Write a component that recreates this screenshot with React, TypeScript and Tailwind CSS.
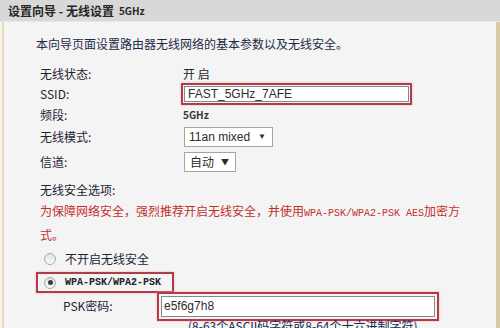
import React from "react";

function Radio({ checked }: { checked?: boolean }) {
  return (
    <div className="w-[12px] h-[12px] rounded-full border border-[#a9a9a9] bg-gradient-to-b from-[#e2e2e2] to-[#fbfbfb] flex items-center justify-center shrink-0">
      {checked ? <div className="w-[5px] h-[5px] rounded-full bg-[#3c3c3c]" /> : null}
    </div>
  );
}

function Row({ label, className, children }: { label: string; className: string; children?: React.ReactNode }) {
  return (
    <div className={"flex items-center " + className}>
      <div className="w-[143px] shrink-0">{label}</div>
      {children}
    </div>
  );
}

export default function App() {
  return (
    <div className="w-[500px] h-[328px] overflow-hidden bg-[#f4f4f4] flex flex-col font-['Noto_Sans_CJK_SC',sans-serif] text-[12px] text-[#1e2433]">
      <div className="h-[22px] shrink-0 bg-[#d8d8d8] border-b border-[#e6e6e6] flex items-center pl-[8px] font-bold text-[#262626] text-[12px] leading-none">
        <span>设置向导 - 无线设置</span>
        <span className="ml-[5px] text-[10px]">5GHz</span>
      </div>
      <div className="flex-1 ml-[2px] border-l-2 border-l-[#e8dbb0] border-r-4 border-r-[#d9caa6] pl-[32px] leading-[20px]">
        <div className="mt-[12px] h-[20px] text-[#1c2a48]">本向导页面设置路由器无线网络的基本参数以及无线安全。</div>
        <div className="pl-[4px]">
          <Row label="无线状态:" className="mt-[10px] h-[20px]">
            <span>开 启</span>
          </Row>
          <Row label="SSID:" className="h-[20px]">
            <div className="w-[231px] h-[22px] -ml-[2px] border-2 border-[#b03c4a] shadow-[0_0_2px_#f2a8b0] p-[1px] bg-[#fbf1f1]">
              <div className="h-full border border-[#7d8c8c] bg-white flex items-center pl-[3px] font-['Liberation_Sans',sans-serif] text-[12px] text-[#2c2c2c]">FAST_5GHz_7AFE</div>
            </div>
          </Row>
          <Row label="频段:" className="h-[21px]">
            <span className="text-[10px] font-bold text-[#333]">5GHz</span>
          </Row>
          <Row label="无线模式:" className="h-[24px]">
            <div className="w-[89px] h-[20px] ml-[1px] border border-[#a4a4a4] bg-white flex items-center justify-between pl-[4px] pr-[6px] font-['Liberation_Sans',sans-serif] text-[12px] text-[#2c2c2c]">
              <span>11an mixed</span>
              <span className="text-[8px]">▼</span>
            </div>
          </Row>
          <Row label="信道:" className="h-[26px]">
            <div className="w-[52px] h-[20px] ml-[1px] border border-[#a4a4a4] bg-white flex items-center justify-between pl-[5px] pr-[6px] text-[12px] text-[#2c2c2c]">
              <span>自动</span>
              <span className="text-[8px]">▼</span>
            </div>
          </Row>
          <div className="mt-[5px] h-[20px]">无线安全选项:</div>
          <div className="leading-[21px] text-[#c0302e]">
            为保障网络安全，强烈推荐开启无线安全，并使用
            <span className="font-['Liberation_Mono',monospace] text-[10px]">WPA-PSK/WPA2-PSK AES</span>
            加密方
            <br />
            式。
          </div>
          <div className="mt-[4px] h-[20px] flex items-center pl-[4px] gap-[9px]">
            <Radio />
            <span>不开启无线安全</span>
          </div>
          <div className="mt-[3px] h-[21px] w-[138px] -ml-[4px] border-2 border-[#b03c4a] shadow-[0_0_2px_#f2a8b0] flex items-center pl-[6px] gap-[9px]">
            <Radio checked />
            <span className="font-['Liberation_Mono',monospace] text-[10px] font-bold text-[#222]">WPA-PSK/WPA2-PSK</span>
          </div>
          <div className="h-[26px] flex items-center">
            <div className="w-[117px] shrink-0 pl-[23px]">PSK密码:</div>
            <div className="w-[282px] h-[29px] border-2 border-[#b03c4a] shadow-[0_0_2px_#f2a8b0] p-[2px] bg-[#fbf1f1]">
              <div className="h-full border border-[#7d8c8c] bg-white flex items-center pl-[2px] font-['Liberation_Sans',sans-serif] text-[12px] text-[#2c2c2c]">e5f6g7h8</div>
            </div>
          </div>
          <div className="h-[14px] leading-[14px] pl-[148px] text-[#1c2450]">(8-63个ASCII码字符或8-64个十六进制字符)</div>
        </div>
      </div>
    </div>
  );
}
